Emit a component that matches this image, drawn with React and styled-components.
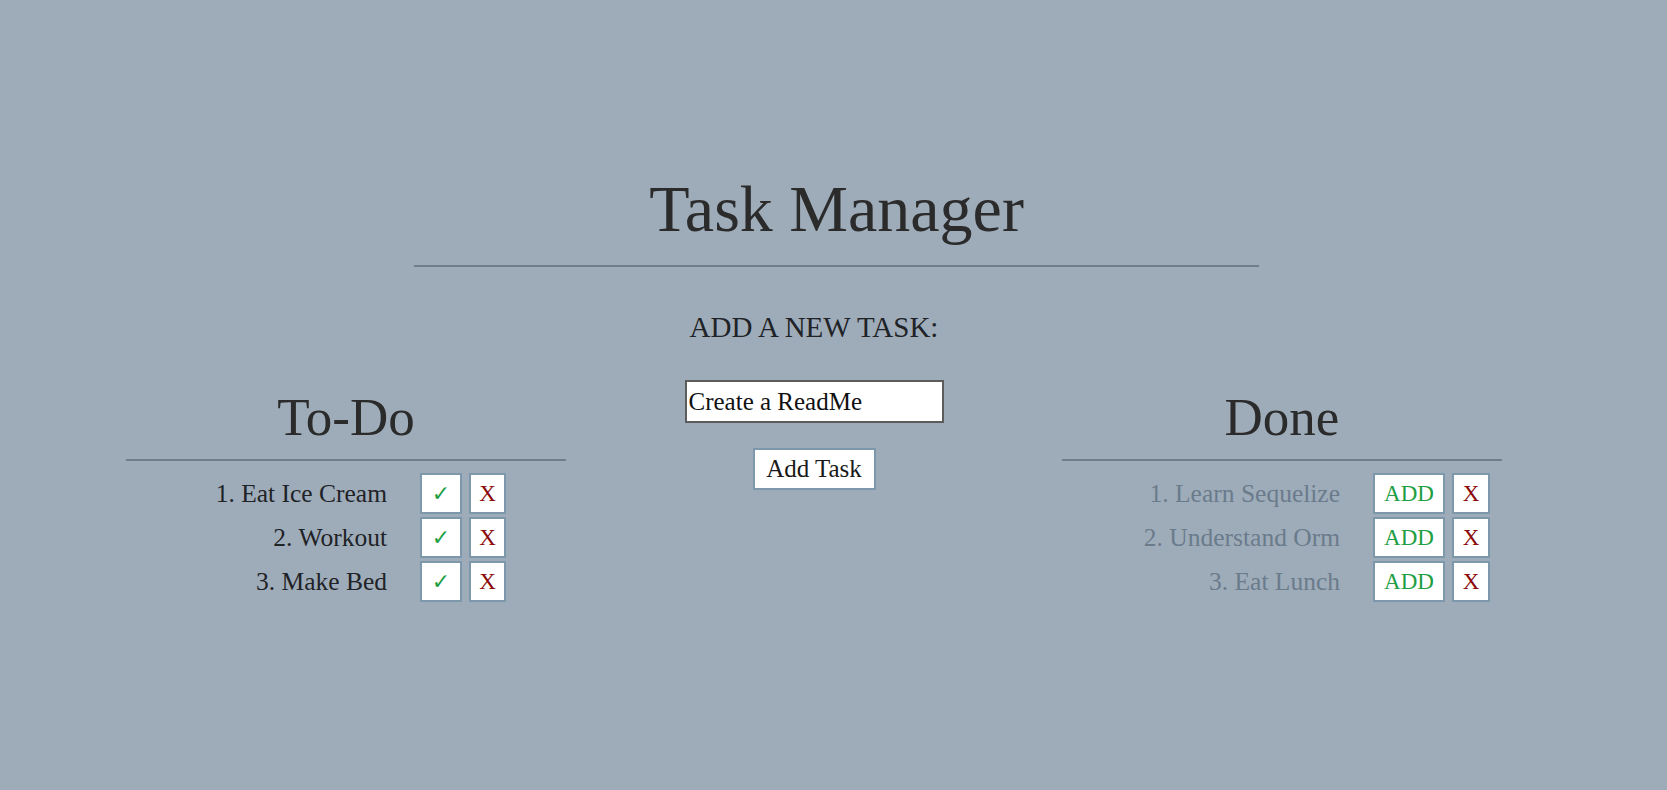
import React from 'react';
import styled, { createGlobalStyle } from 'styled-components';

const GlobalStyle = createGlobalStyle`
    body {
        margin: 0;
        background-color: #9eacb9;
        font-family: "Liberation Serif", "Times New Roman", serif;
        color: #2b2b2b;
    }
`

const Page = styled.div`
    min-height: 790px;
    padding-top: 176px;
    box-sizing: border-box;
`

const Header = styled.header`
    width: 845px;
    margin-left: 414px;
`

const Title = styled.h1`
    margin: 0;
    font-size: 66px;
    line-height: 66px;
    font-weight: 400;
    text-align: center;
    color: #2b2b2b;
`

const Rule = styled.div`
    height: 2px;
    margin-top: ${props => props.top || 0}px;
    margin-left: ${props => props.inset || 0}px;
    margin-right: ${props => props.inset || 0}px;
    background-color: #6f7e8b;
`

const Board = styled.main`
    display: grid;
    grid-template-columns: 468px 468px 468px;
    margin-top: 46px;
    margin-left: 112px;
`

const Column = styled.section`
    padding-top: 78px;
`

const ColumnTitle = styled.h2`
    margin: 0;
    font-size: 53px;
    line-height: 53px;
    font-weight: 400;
    text-align: center;
    color: #2b2b2b;
`

const TaskList = styled.ol`
    list-style: none;
    margin: 12px 0 0;
    padding: 0;
    display: flex;
    flex-direction: column;
    gap: 3px;
`

const TaskRow = styled.li`
    display: grid;
    grid-template-columns: ${props => props.textWidth}px auto auto;
    justify-content: start;
    column-gap: 7px;
    align-items: center;
    height: 41px;
`

const TaskText = styled.span`
    padding-right: 26px;
    text-align: right;
    font-size: 25.5px;
    white-space: nowrap;
    color: ${props => props.done ? "#6a7b8c" : "#1f2327"};
`

const ActionButton = styled.button`
    box-sizing: border-box;
    height: 41px;
    width: ${props => props.width}px;
    padding: 0;
    border: 2px solid #7d97ab;
    background-color: #ffffff;
    font-family: ${props => props.glyph ? '"DejaVu Sans", sans-serif' : '"Liberation Serif", serif'};
    font-size: ${props => props.glyph ? 22 : 23}px;
    font-weight: ${props => props.glyph ? 700 : 400};
    line-height: 1;
    color: ${props => props.tone === "red" ? "#8b0a0a" : "#1f9e44"};
    cursor: pointer;
`

const Composer = styled.section`
    display: flex;
    flex-direction: column;
    align-items: center;
`

const ComposerTitle = styled.h3`
    margin: 0;
    font-size: 29px;
    line-height: 29px;
    font-weight: 400;
    color: #1f2327;
`

const TaskInput = styled.input`
    box-sizing: border-box;
    width: 259px;
    height: 43px;
    margin-top: 38px;
    padding: 0 2px;
    border: 2px solid #5c5c5c;
    background-color: #ffffff;
    font-family: "Liberation Serif", serif;
    font-size: 25px;
    color: #111111;
    outline: none;
`

const SubmitButton = styled.button`
    box-sizing: border-box;
    width: 123px;
    height: 42px;
    margin-top: 25px;
    border: 2px solid #7d97ab;
    background-color: #ffffff;
    font-family: "Liberation Serif", serif;
    font-size: 25px;
    color: #1a1a1a;
    cursor: pointer;
`

const todo = ["Eat Ice Cream", "Workout", "Make Bed"];
const done = ["Learn Sequelize", "Understand Orm", "Eat Lunch"];

export default class App extends React.Component {
    constructor(props) {
        super(props);
        this.state = { draft: "Create a ReadMe" };
    }

    render() {
        return (
            <Page>
                <GlobalStyle />
                <Header>
                    <Title>Task Manager</Title>
                    <Rule top={23} />
                </Header>
                <Board>
                    <Column>
                        <ColumnTitle>To-Do</ColumnTitle>
                        <Rule top={15} inset={14} />
                        <TaskList>
                            {todo.map((task, i) =>
                                <TaskRow key={task} textWidth={301}>
                                    <TaskText>{i + 1}. {task}</TaskText>
                                    <ActionButton glyph width={42}>✓</ActionButton>
                                    <ActionButton tone="red" width={37}>X</ActionButton>
                                </TaskRow>
                            )}
                        </TaskList>
                    </Column>
                    <Composer>
                        <ComposerTitle>ADD A NEW TASK:</ComposerTitle>
                        <TaskInput
                            value={this.state.draft}
                            onChange={e => this.setState({ draft: e.target.value })}
                        />
                        <SubmitButton>Add Task</SubmitButton>
                    </Composer>
                    <Column>
                        <ColumnTitle>Done</ColumnTitle>
                        <Rule top={15} inset={14} />
                        <TaskList>
                            {done.map((task, i) =>
                                <TaskRow key={task} textWidth={318}>
                                    <TaskText done>{i + 1}. {task}</TaskText>
                                    <ActionButton width={72}>ADD</ActionButton>
                                    <ActionButton tone="red" width={38}>X</ActionButton>
                                </TaskRow>
                            )}
                        </TaskList>
                    </Column>
                </Board>
            </Page>
        )
    }
}
